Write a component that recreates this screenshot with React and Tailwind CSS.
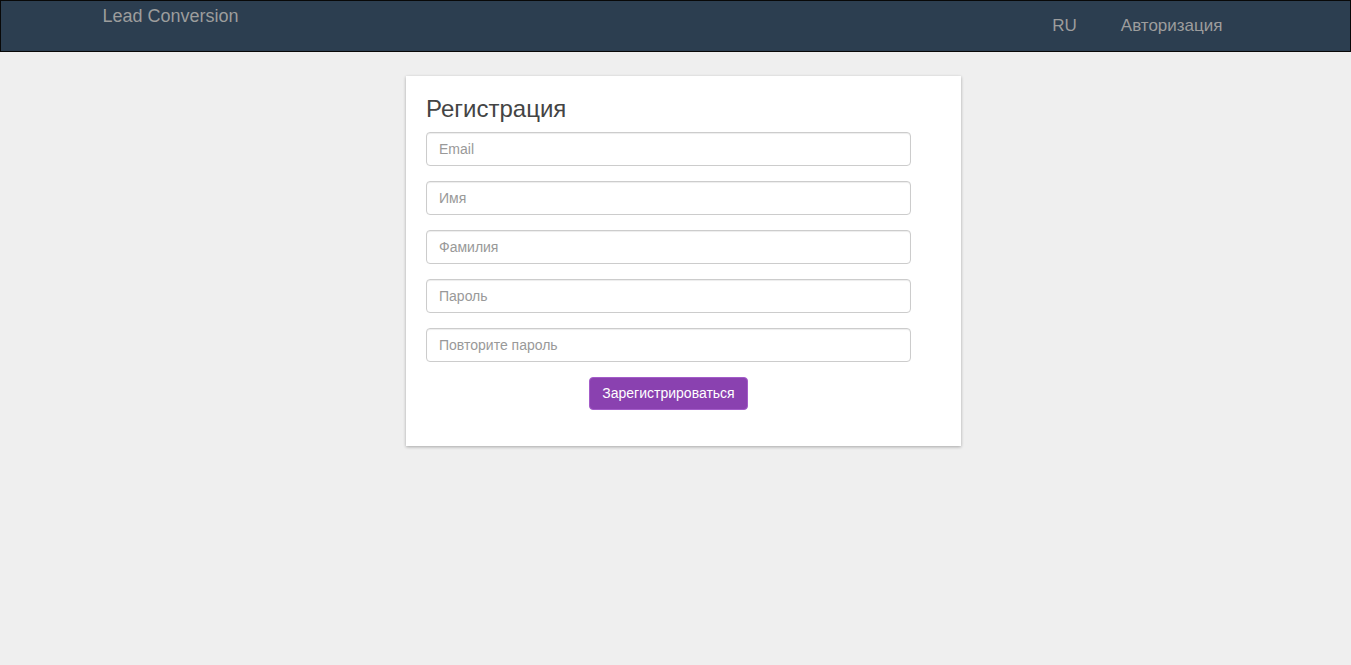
export default function App() {
  const fields = ["Email", "Имя", "Фамилия", "Пароль", "Повторите пароль"];

  return (
    <div
      className="min-h-[665px] bg-[#efefef]"
      style={{ fontFamily: '"Liberation Sans", Arial, sans-serif' }}
    >
      <nav className="h-[52px] border border-[#080808] bg-[#2c3e50]">
        <div className="mx-auto flex h-full w-[1170px] items-start justify-between pl-[12px] pr-[38px]">
          <a className="pt-[5px] text-[18px] leading-[20px] text-[#9d9d9d]">
            Lead Conversion
          </a>
          <ul className="flex h-full items-center gap-[44px] text-[17px] leading-[20px] text-[#9d9d9d]">
            <li>RU</li>
            <li>Авторизация</li>
          </ul>
        </div>
      </nav>

      <div className="mx-auto w-[1170px] pt-[24px]">
        <div className="ml-[315.5px] w-[555px] bg-white px-[20px] pb-[36px] pt-[20px] shadow-[0_1px_3px_rgba(0,0,0,0.3)]">
          <div className="w-[485px]">
            <h3 className="mb-[10px] text-[24px] leading-[26px] text-[#444]">
              Регистрация
            </h3>
            <form className="flex flex-col gap-[15px]">
              {fields.map((f) => (
                <input
                  key={f}
                  type="text"
                  placeholder={f}
                  className="h-[34px] w-full rounded-[4px] border border-[#ccc] px-[12px] text-[14px] text-[#555] shadow-[inset_0_1px_1px_rgba(0,0,0,0.075)] outline-none placeholder:text-[#999]"
                />
              ))}
              <div className="flex justify-center">
                <button
                  type="button"
                  className="h-[33px] rounded-[4px] border border-[#a45cc9] bg-[#8a41b0] px-[12px] text-[14px] text-white"
                >
                  Зарегистрироваться
                </button>
              </div>
            </form>
          </div>
        </div>
      </div>
    </div>
  );
}
